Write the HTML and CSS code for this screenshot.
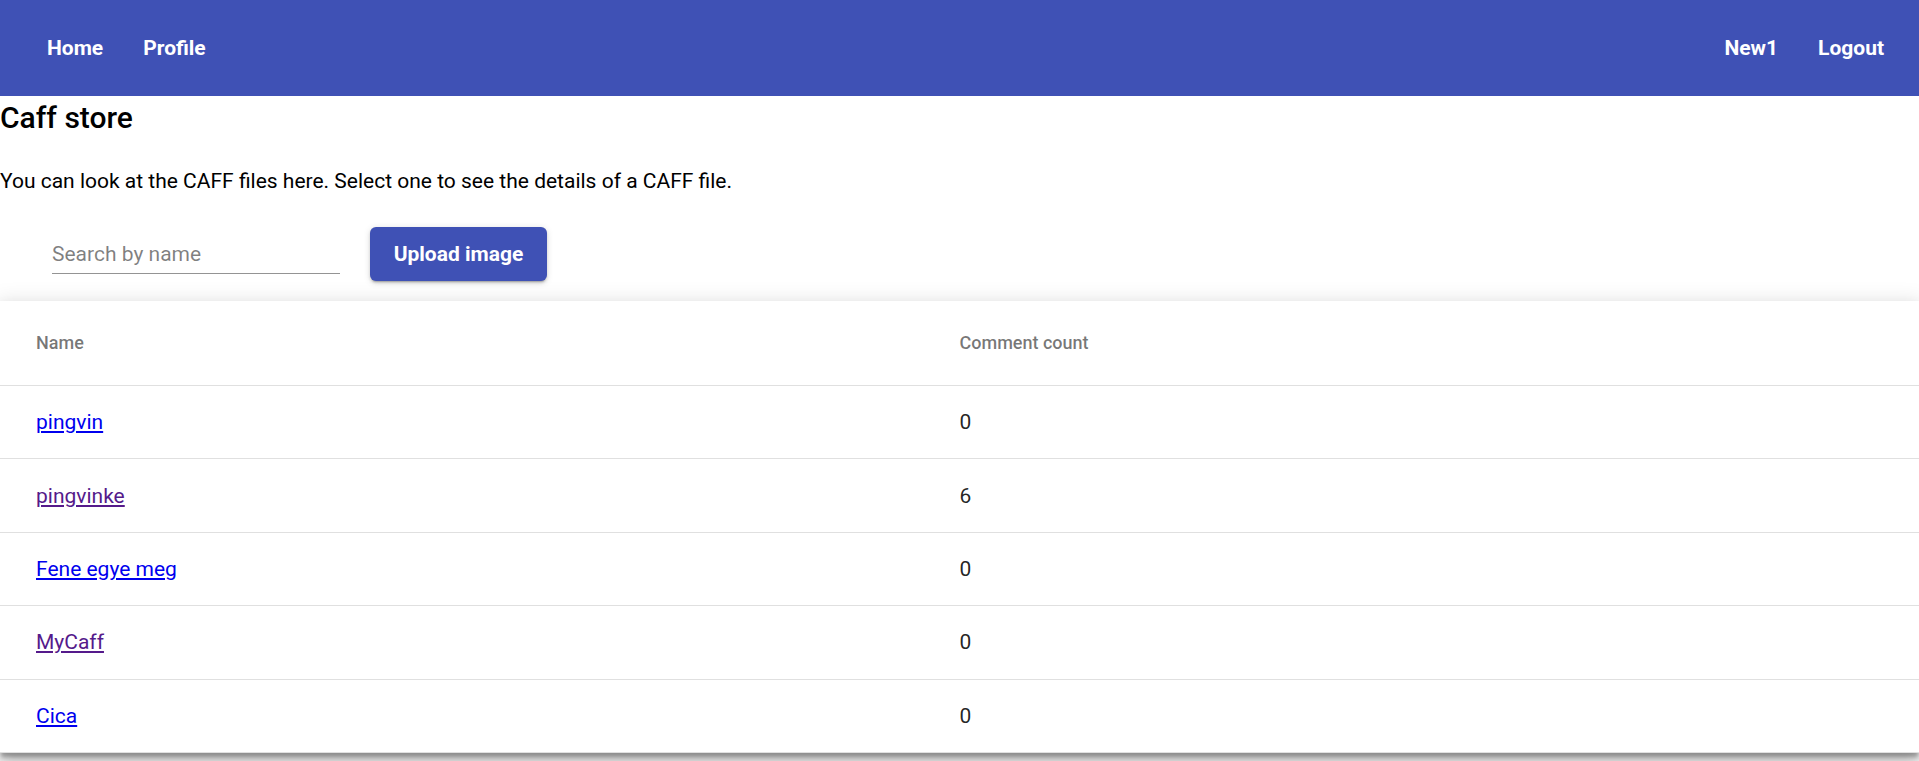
FILE: index.html
```html
<!DOCTYPE html>
<html lang="en">
<head>
<meta charset="utf-8">
<title>Caff store</title>
<link rel="stylesheet" href="styles.css">
</head>
<body>
<header class="toolbar">
  <nav class="nav-left">
    <a class="nav-btn" href="#">Home</a>
    <a class="nav-btn" href="#">Profile</a>
  </nav>
  <nav class="nav-right">
    <a class="nav-btn" href="#">New1</a>
    <a class="nav-btn" href="#">Logout</a>
  </nav>
</header>
<main>
  <h2 class="title">Caff store</h2>
  <p class="intro">You can look at the CAFF files here. Select one to see the details of a CAFF file.</p>
  <div class="actions">
    <div class="field">
      <input class="field-input" type="text" placeholder="Search by name">
    </div>
    <button class="raised-btn" type="button">Upload image</button>
  </div>
  <div class="table">
    <div class="row header-row">
      <div class="cell head">Name</div>
      <div class="cell head">Comment count</div>
    </div>
    <div class="row">
      <div class="cell"><a class="link" href="#">pingvin</a></div>
      <div class="cell">0</div>
    </div>
    <div class="row">
      <div class="cell"><a class="link visited" href="#">pingvinke</a></div>
      <div class="cell">6</div>
    </div>
    <div class="row">
      <div class="cell"><a class="link" href="#">Fene egye meg</a></div>
      <div class="cell">0</div>
    </div>
    <div class="row">
      <div class="cell"><a class="link visited" href="#">MyCaff</a></div>
      <div class="cell">0</div>
    </div>
    <div class="row">
      <div class="cell"><a class="link" href="#">Cica</a></div>
      <div class="cell">0</div>
    </div>
  </div>
</main>
</body>
</html>
```
FILE: styles.css
```css
* { box-sizing: border-box; }
html, body {
  margin: 0;
  padding: 0;
  background: #ffffff;
  font-family: Roboto, "Liberation Sans", sans-serif;
  color: rgba(0, 0, 0, 0.87);
}
.toolbar {
  height: 96px;
  background: #3f51b5;
  display: flex;
  align-items: center;
  justify-content: space-between;
  padding: 0 15px 0 27px;
}
.nav-left, .nav-right {
  display: flex;
  align-items: center;
}
.nav-btn {
  color: #ffffff;
  text-decoration: none;
  font-size: 21px;
  font-weight: 700;
  line-height: 54px;
  padding: 0 20px;
}
.title {
  margin: 0 0 26px 0;
  font-size: 30px;
  line-height: 44px;
  font-weight: 500;
  color: #000000;
}
.intro {
  margin: 0;
  font-size: 21px;
  line-height: 30px;
  color: #000000;
}
.actions {
  display: flex;
  align-items: flex-start;
  gap: 30px;
  padding: 31px 0 20px 52px;
}
.field {
  width: 288px;
  height: 47px;
  border-bottom: 1px solid rgba(0, 0, 0, 0.42);
  display: flex;
  align-items: flex-end;
  padding-bottom: 4px;
}
.field-input {
  border: none;
  outline: none;
  background: transparent;
  padding: 0;
  margin: 0;
  width: 100%;
  height: 30px;
  font-family: Roboto, "Liberation Sans", sans-serif;
  font-size: 21px;
  line-height: 30px;
  color: rgba(0, 0, 0, 0.87);
}
.field-input::placeholder {
  color: rgba(0, 0, 0, 0.5);
}
.raised-btn {
  height: 54px;
  width: 177px;
  border: none;
  border-radius: 6px;
  background: #3f51b5;
  color: #ffffff;
  font-family: Roboto, "Liberation Sans", sans-serif;
  font-size: 21px;
  font-weight: 700;
  padding: 0;
  box-shadow: 0 3px 1.5px -2px rgba(0,0,0,.2), 0 2px 3px 0 rgba(0,0,0,.14), 0 1.5px 7px 0 rgba(0,0,0,.12);
}
.table {
  background: #ffffff;
  margin-bottom: 9px;
  box-shadow: 0 5px 4px -1px rgba(0,0,0,.28), 0 12px 15px 2px rgba(0,0,0,.16), 0 4px 21px 3px rgba(0,0,0,.12);
}
.row {
  display: grid;
  grid-template-columns: 1fr 1fr;
  align-items: center;
  padding: 0 36px;
  height: 73.4px;
  border-bottom: 1px solid #e0e0e0;
}
.header-row {
  height: 85px;
}
.cell {
  font-size: 21px;
  line-height: 30px;
}
.cell.head {
  font-size: 18px;
  font-weight: 500;
  color: rgba(0, 0, 0, 0.54);
}
.link {
  color: #0000ee;
  text-decoration: underline;
}
.link.visited {
  color: #551a8b;
}
```
